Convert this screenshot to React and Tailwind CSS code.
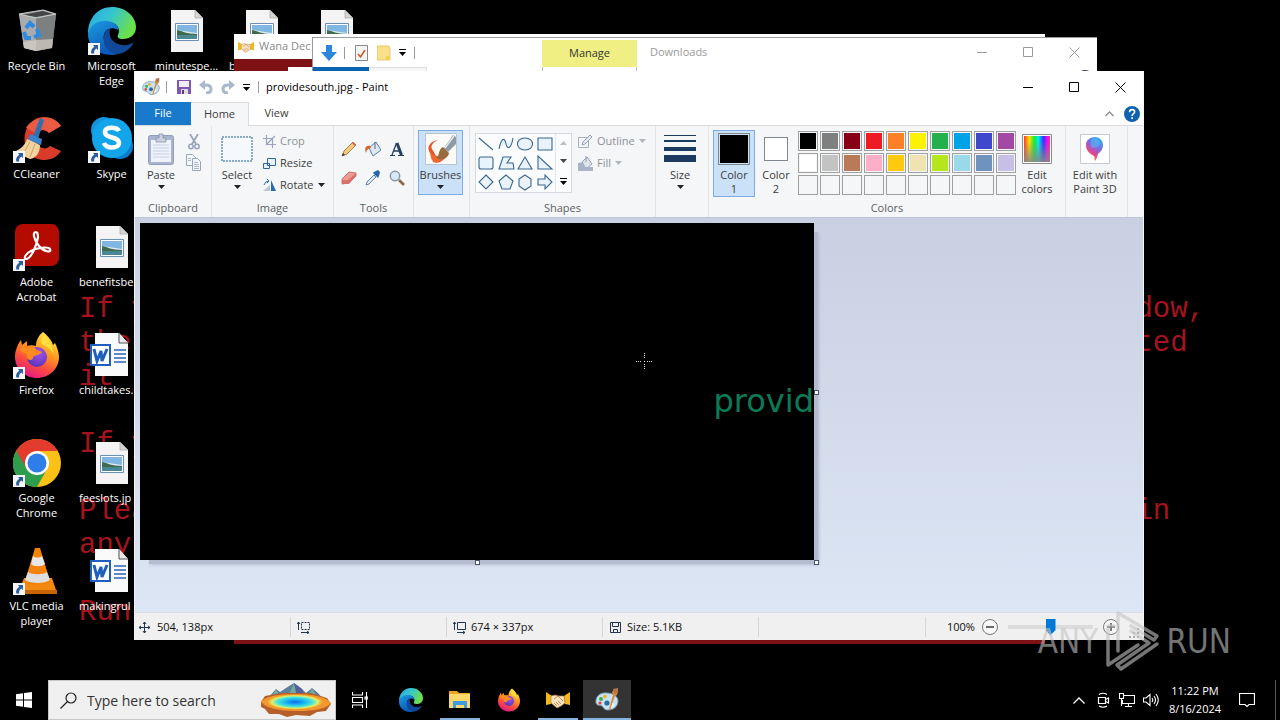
import { useState } from "react"

const Shortcut = () => (
  <svg className="absolute left-0 bottom-0 size-3" viewBox="0 0 12 12">
    <path d="M0 0h12v12H0z" fill="#f4f6f9" />
    <path d="M5 2h5v5L8.400 5.600C6.500 6.700 5.800 8 6.200 10.500H3.300C2.600 7.600 3.700 5.300 6.400 3.700z" fill="#2b5c9e" />
  </svg>
)

const EdgeIcon = ({ className }) => (
  <svg className={className} viewBox="0 0 48 48">
    <defs>
      <linearGradient id="edgeTop" x1="0" y1="0" x2="1" y2="0.4">
        <stop offset="0" stopColor="#2aa9e8" />
        <stop offset="0.5" stopColor="#35c5cf" />
        <stop offset="1" stopColor="#6be04c" />
      </linearGradient>
      <linearGradient id="edgeLeft" x1="0" y1="0" x2="0.5" y2="1">
        <stop offset="0" stopColor="#1b9de2" />
        <stop offset="1" stopColor="#0b57b8" />
      </linearGradient>
    </defs>
    <path d="M24 0C38 0 48 10 48 20c0 8-6 12-13 12-5 0-6-2-5-4 3-6-1-13-10-13C10 15 3 20 0 27 0 11 10 0 24 0z" fill="url(#edgeTop)" />
    <path d="M0 27c2-9 10-14 19-13 8 1 12 5 11 9-8-5-16 1-14 10 2 8 8 13 15 14C13 51 0 41 0 27z" fill="url(#edgeLeft)" />
    <path d="M16 29c1-5 4-7 6-7-2 8 3 15 12 16 5 1 9-1 12-3-4 8-11 12-17 12-9-1-15-9-13-18z" fill="#11499a" />
  </svg>
)

const FirefoxIcon = ({ className }) => (
  <svg className={className} viewBox="0 0 48 48">
    <defs>
      <linearGradient id="ffBody" x1="0.8" y1="0" x2="0.3" y2="1">
        <stop offset="0" stopColor="#fff04c" />
        <stop offset="0.4" stopColor="#ff9a1f" />
        <stop offset="0.7" stopColor="#fb4b3e" />
        <stop offset="1" stopColor="#e4158a" />
      </linearGradient>
      <radialGradient id="ffGlobe" cx="0.6" cy="0.3" r="0.7">
        <stop offset="0" stopColor="#a650f0" />
        <stop offset="1" stopColor="#5a36b8" />
      </radialGradient>
    </defs>
    <path d="M30 1c6 5 9 9 10 13l2-2c3 6 4 11 4 14 0 12-10 21-22 21S2 38 2 26c0-7 3-13 6-17l1 5 5-4v5c3-1 6-1 9 0 0-6 3-11 7-14z" fill="url(#ffBody)" />
    <circle cx="24" cy="26" r="10" fill="url(#ffGlobe)" />
    <path d="M6 18c7-5 14-4 18 1l5 2c-2 3-6 3-8 4-2 2 0 3-3 4-4 0-5-3-4-6-3-1-6-2-8-5z" fill="#ff8a1e" />
    <path d="M31 4c5 5 9 11 9 19-2-5-5-7-10-9-3-3-2-7 1-10z" fill="#ffdd3c" />
  </svg>
)

const PaletteIcon = ({ className }) => (
  <svg className={className} viewBox="0 0 24 24">
    <path d="M12 5C5 4 0 9 1 15c1 3 4 2 6 3 2 2 2 4 6 4 6 0 10-4 10-9 0-4-4-8-11-8z" fill="#c9e2f2" stroke="#6d93ad" strokeWidth="1" />
    <circle cx="6" cy="11" r="2" fill="#3dae49" />
    <circle cx="10" cy="8.500" r="1.800" fill="#f0b21c" />
    <circle cx="5" cy="15" r="1.600" fill="#e0443b" />
    <circle cx="12" cy="15" r="2.600" fill="#2c6da8" />
    <circle cx="17" cy="17" r="2" fill="#fff" />
    <path d="M20 1l3 1-1 5-2 1-5 14-1-1 4-14-1-3z" fill="#d98a3a" />
    <path d="M18 1l5-1v5l-4 1z" fill="#b87544" />
  </svg>
)

const HandsIcon = ({ className }) => (
  <svg className={className} viewBox="0 0 24 18">
    <path d="M0 1l6 4-1 8-5 1zM24 1l-6 4 1 8 5 1z" fill="#f2b91c" />
    <path d="M5 5l4-1 4 1 5 0 1 7-4 3-4 2-6-5z" fill="#f9e2c0" stroke="#b5793f" strokeWidth=".7" />
    <path d="M8 8l4-3 5 5M8 12l3 3M10 11l3 3M12 10l3 3" stroke="#b5793f" strokeWidth=".8" fill="none" />
  </svg>
)

const BinIcon = () => (
  <svg className="size-12" viewBox="0 0 48 48">
    <path d="M6 7l24-4 13 4-4 34-16 3-12-3z" fill="#8f9293" />
    <path d="M6 7l17 4v33l-12-3z" fill="#a9abac" />
    <path d="M23 11l20-4-4 34-16 3z" fill="#7d8081" />
    <path d="M9 8l21-4 10 3-17 3z" fill="#434546" />
    <path d="M6 7l24-4 13 4-20 4z" fill="none" stroke="#c9cbcc" strokeWidth="1.200" />
    <path d="M10 35l13-2 17-1-1 9-16 3-12-3z" fill="#d8d0c8" opacity=".7" />
    <g fill="none" stroke="#2c8be0" strokeWidth="4">
      <path d="M13 21l4-5 4 4" />
      <path d="M24 22l2 6-5 2" />
      <path d="M18 31h-5l-2-6" />
    </g>
  </svg>
)

const CCleanerIcon = () => (
  <svg className="size-12" viewBox="0 0 48 48">
    <path d="M48 11L36 18c-4-5-12-3-13 4-1 9 8 15 14 9l11 5C42 46 27 48 18 40 8 31 10 12 21 5c9-6 22-2 27 6z" fill="#d83b2a" />
    <path d="M48 11L36 18c-4-5-10-4-12 1L13 13C19 2 39-3 48 11z" fill="#ea5b43" />
    <path d="M27 3l4 2-6 19-5-2z" fill="#2f6fb3" />
    <path d="M17 19l12 5-1 6-13-5z" fill="#3a82cc" />
    <path d="M14 24l13 6c0 8-4 13-10 14L1 37c7-3 11-7 13-13z" fill="#f3d4a0" />
    <path d="M17 27l-7 12M22 29l-5 13" stroke="#cfa262" strokeWidth="1" />
  </svg>
)

const SkypeIcon = () => (
  <svg className="size-12" viewBox="0 0 48 48">
    <circle cx="16" cy="15" r="13" fill="#1493df" />
    <circle cx="32" cy="31" r="13" fill="#0d7bd0" />
    <circle cx="24" cy="23" r="20" fill="#12a5ea" />
    <path d="M31 16c-2-4-14-5-14 1 0 7 14 4 14 11 0 6-13 6-15 0" fill="none" stroke="#fff" strokeWidth="4.500" />
  </svg>
)

const AcrobatIcon = () => (
  <svg className="size-12" viewBox="0 0 48 48">
    <rect x="2" y="1" width="44" height="42" rx="8" fill="#b30b00" />
    <path d="M23 9c-4 0-2 8 3 14 5 6 13 7 11 3-2-3-14-1-19 2-5 2-8 8-5 8 5 0 11-14 12-22 0-3-1-5-2-5z" fill="none" stroke="#fff" strokeWidth="2.200" />
  </svg>
)

const ChromeIcon = () => (
  <svg className="size-12" viewBox="0 0 48 48">
    <circle cx="24" cy="24" r="24" fill="#fbc116" />
    <path d="M24 24L3.200 12A24 24 0 0 0 24 48l10-18z" fill="#2e9e4c" />
    <path d="M3.200 12A24 24 0 0 1 44.800 12H24L14 30z" fill="#e33b2e" />
    <circle cx="24" cy="24" r="12" fill="#fff" />
    <circle cx="24" cy="24" r="9.500" fill="#2f7de9" />
  </svg>
)

const VlcIcon = () => (
  <svg className="size-12" viewBox="0 0 48 48">
    <path d="M11 31h28l5 15H5z" fill="#f28a10" />
    <path d="M5 43h39v4H4z" fill="#c96405" />
    <path d="M22 1h5l10 33c-2 5-23 5-25 0z" fill="#f4820b" />
    <path d="M20 9c2 2 7 2 9 0l3 8c-3 3-11 3-14 0z" fill="#e8e8e8" />
    <path d="M15 25c4 3 15 3 19 0l3 8c-5 4-20 4-25 0z" fill="#dedede" />
  </svg>
)

const PictureFileIcon = () => (
  <svg className="size-12" viewBox="0 0 48 48">
    <path d="M8 3h24l8 8v34H8z" fill="#f4f4f4" />
    <path d="M32 3v8h8z" fill="#d5d5d5" stroke="#a7a7a7" strokeWidth=".7" />
    <path d="M12.500 16.500h23v17h-23z" fill="#fff" stroke="#6c8fb8" />
    <path d="M14 18h20v14H14z" fill="#7fb6e2" />
    <path d="M14 23l20 3v2H14z" fill="#dcebf2" />
    <path d="M14 23c6 1 9 4 20 4v2H14z" fill="#3f6b4c" />
    <path d="M14 28h20v4H14z" fill="#4c8894" />
  </svg>
)

const WordFileIcon = () => (
  <svg className="size-12" viewBox="0 0 48 48">
    <path d="M7 2h24l9 10v33H7z" fill="#fafafa" />
    <path d="M31 2v10h9" fill="#e9e9e9" stroke="#555" strokeWidth="1" />
    <path d="M26 19h12M26 23h12M26 27h12M26 31h12" stroke="#2b63b8" strokeWidth="1.500" />
    <path d="M2 13h21v22H2z" fill="#1f5fbe" />
    <path d="M4 15h17v18H4z" fill="#fff" />
    <path d="M6 18l3 12 4-10 1 10 5-12" fill="none" stroke="#1f5fbe" strokeWidth="3" />
  </svg>
)

const DownArrow = ({ className = "fill-[#222]" }) => (
  <svg className={"w-[7px] h-1 shrink-0 " + className} viewBox="0 0 7 4"><path d="M0 0h7L3.500 4z" /></svg>
)

const MoreArrow = () => (
  <svg className="w-[7px] h-[7px]" viewBox="0 0 7 7"><path d="M0 0h7v1H0zM0 3h7L3.500 7z" /></svg>
)

const WindowButtons = () => (
  <div className="ml-auto flex self-stretch">
    <button aria-label="Minimize" className="w-[45px] flex items-center justify-center">
      <svg className="size-[11px]" viewBox="0 0 11 11"><path d="M0 5.500h10" stroke="currentColor" /></svg>
    </button>
    <button aria-label="Maximize" className="w-[46px] flex items-center justify-center">
      <svg className="size-[11px]" viewBox="0 0 11 11"><path d="M.5.500h9v9h-9z" fill="none" stroke="currentColor" /></svg>
    </button>
    <button aria-label="Close" className="w-[46px] flex items-center justify-center">
      <svg className="size-[11px]" viewBox="0 0 11 11"><path d="M.5.500l10 10M10.500.500l-10 10" stroke="currentColor" /></svg>
    </button>
  </div>
)

const desktopItems = [
  { label: "Recycle Bin", Icon: BinIcon },
  { label: "CCleaner", Icon: CCleanerIcon, link: true },
  { label: "Adobe Acrobat", Icon: AcrobatIcon, link: true },
  { label: "Firefox", Icon: () => <FirefoxIcon className="size-12" />, link: true },
  { label: "Google Chrome", Icon: ChromeIcon, link: true },
  { label: "VLC media player", Icon: VlcIcon, link: true },
  { label: "Microsoft Edge", Icon: () => <EdgeIcon className="size-12" />, link: true },
  { label: "Skype", Icon: SkypeIcon, link: true },
  { label: "benefitsbe", Icon: PictureFileIcon, left: true },
  { label: "childtakes.", Icon: WordFileIcon, left: true },
  { label: "feeslots.jp", Icon: PictureFileIcon, left: true },
  { label: "makingrul", Icon: WordFileIcon, left: true },
  { label: "minutespe...", Icon: PictureFileIcon },
]

const DesktopItem = ({ label, Icon, link, left }) => (
  <button className="w-full relative flex flex-col items-center pt-[7px] text-white leading-[15px]">
    <span className="relative block">
      <Icon />
      {link && <Shortcut />}
    </span>
    <span className={left ? "mt-[3px] w-full pl-[5px] text-left whitespace-nowrap" : "mt-[3px] px-1 text-center"}>{label}</span>
  </button>
)

const Desktop = () => (
  <div className="absolute -left-px top-0 grid grid-flow-col grid-rows-[repeat(6,108px)] auto-cols-[75px]">
    {desktopItems.map((item) => <DesktopItem key={item.label} {...item} />)}
    <div className="row-start-1 col-start-4"><DesktopItem label="b" Icon={PictureFileIcon} left /></div>
    <div className="row-start-1 col-start-5"><DesktopItem Icon={PictureFileIcon} /></div>
  </div>
)

const Wallpaper = () => (
  <div className="absolute left-0 right-0 top-[293px] pl-[79px] pr-[75px] flex justify-between whitespace-pre font-['Liberation_Mono',monospace] text-[29px] leading-[34px] text-[#a5141e]">
    <div className="flex flex-col gap-[33px]">
      <p>{"If y\nthen\nit"}</p>
      <p>If y</p>
      <p>{"Plea\nany"}</p>
      <p>Run</p>
    </div>
    <div className="flex flex-col gap-[33px]">
      <p>{"dow,\nted\n "}</p>
      <p>{" "}</p>
      <p>in</p>
    </div>
  </div>
)

const WanaWindow = () => (
  <div className="absolute left-[234px] right-[235px] top-[34px] bottom-[76px] bg-[#7d1113]">
    <div className="h-[25px] bg-white flex items-center gap-[5px] pl-1 text-[#8a8a8a]">
      <HandsIcon className="w-4 h-3" />
      <span>Wana Dec</span>
    </div>
    <div className="mt-2 ml-[54px] mr-4 h-10 bg-white"></div>
  </div>
)

const ExplorerWindow = () => (
  <div className="absolute left-[312px] right-[183px] top-[37px] bottom-24 bg-white border-t border-l border-[#9a9a9a]">
    <div className="h-[29px] flex items-center text-[#9a9a9a]">
      <svg className="ml-2 size-4" viewBox="0 0 16 16"><path d="M5 0h6v7h5l-8 9-8-9h5z" fill="#2b87dd" /></svg>
      <span className="ml-[7px] w-px h-3 bg-[#999]"></span>
      <svg className="ml-2.5 w-[13px] h-4" viewBox="0 0 13 16">
        <path d="M.5.500h12v15H.5z" fill="#f5f5f5" stroke="#888" />
        <path d="M3 9l2.500 3L10 5" fill="none" stroke="#d85a28" strokeWidth="1.600" />
      </svg>
      <svg className="ml-[9px] w-[14px] h-4" viewBox="0 0 14 16">
        <path d="M0 1h12l1 3v11H0z" fill="#fbe08a" stroke="#e3bd55" strokeWidth=".8" />
        <path d="M9 11h4v4H9z" fill="#f6cd58" />
      </svg>
      <span className="ml-2 text-black"><MoreArrow /></span>
      <span className="ml-2 w-px h-3 bg-[#999]"></span>
      <span className="ml-[127px] mt-0.5 self-stretch w-[95px] flex items-center justify-center bg-[#f0ef83] text-[#333]">Manage</span>
      <span className="ml-[13px]">Downloads</span>
      <WindowButtons />
    </div>
    <div className="h-6 flex">
      <div className="w-14 bg-[#0a64b0]"></div>
      <div className="w-[58px] bg-[#f5f6f7] border-t border-r border-[#ddd]"></div>
      <div className="ml-[115px] w-[95px] border-x border-[#bbb]"></div>
      <div className="ml-auto mr-1 mt-[3px] size-4 rounded-full bg-[#26364a]"></div>
    </div>
  </div>
)

const Group = ({ label, className, children }) => (
  <div className={"h-[91px] pt-1 flex flex-col border-r border-[#e2e4e7] " + className}>
    <div className="flex-1 flex">{children}</div>
    <div className="h-4 mb-px text-center leading-4 text-[#5c5f63]">{label}</div>
  </div>
)

// tall ribbon button: picture, one or two caption lines, optional menu arrow
const BigButton = ({ icon, lines, arrow, className }) => (
  <button className={"flex flex-col items-center leading-[13px] border " + className}>
    <span className="h-9 flex items-center justify-center">{icon}</span>
    {lines.map((line) => <span key={line} className="block mt-px first:mt-0 whitespace-nowrap">{line}</span>)}
    {arrow && <span className="mt-1"><DownArrow /></span>}
  </button>
)

const shapes = [
  "M2 3l14 12",
  "M2 14C5 0 8 4 9 9s5 6 7-6",
  "M9 3c10 0 10 12 0 12S-1 3 9 3z",
  "M2 3h14v12H2z",
  "M4 3h10q2 0 2 2v8q0 2-2 2H4q-2 0-2-2V5q0-2 2-2z",
  "M6 3h8l-4 6h6l1 6H2z",
  "M9 3l7 12H2z",
  "M2 2v13h14z",
  "M9 2l7 7-7 7-7-7z",
  "M9 2l7 6-3 8H5L2 8z",
  "M9 2l6 4v7l-6 4-6-4V6z",
  "M2 6h7V2l7 7-7 7v-4H2z",
]

const palette = [
  "bg-black", "bg-[#7f7f7f]", "bg-[#880015]", "bg-[#ed1c24]", "bg-[#ff7f27]", "bg-[#fff200]", "bg-[#22b14c]", "bg-[#00a2e8]", "bg-[#3f48cc]", "bg-[#a349a4]",
  "bg-white", "bg-[#c3c3c3]", "bg-[#b97a57]", "bg-[#ffaec9]", "bg-[#ffc90e]", "bg-[#efe4b0]", "bg-[#b5e61d]", "bg-[#99d9ea]", "bg-[#7092be]", "bg-[#c8bfe7]",
  "", "", "", "", "", "", "", "", "", "",
]

const tools = [
  {
    name: "Pencil",
    icon: <><path d="M1 15l2-5L12 1l3 3-9 9z" fill="#f3c982" stroke="#a06a2c" strokeWidth=".8" /><path d="M11 2l3 3 1-1-3-3z" fill="#d8574f" /><path d="M1 15l1-3 2 2z" fill="#333" /></>,
  },
  {
    name: "Fill with color",
    icon: <><path d="M4 7l7-6 5 8-8 6z" fill="#dce9f5" stroke="#5c7f9f" /><path d="M10 1v7" stroke="#4e6d8c" /><path d="M5 5C1 4-1 7 1 12c1-4 2-4 5-5z" fill="#d7632e" /></>,
  },
  {
    name: "Text",
    icon: <><path d="M7.500 2L3 14M5 10h6" fill="none" stroke="#24415f" strokeWidth="1.300" /><path d="M8 2l4.500 12" fill="none" stroke="#24415f" strokeWidth="3" /><path d="M1 14.500h5M9 14.500h6" stroke="#24415f" strokeWidth="1.200" /></>,
  },
  {
    name: "Eraser",
    icon: <><path d="M1 9l7-7 7 1v3l-7 7-7 1z" fill="#f09a96" stroke="#c25f5c" strokeWidth=".8" /><path d="M1 10h6l8-7v3l-7 8H1z" fill="#d8716d" /></>,
  },
  {
    name: "Color picker",
    icon: <><path d="M1 15l1-3 7-7 2 2-7 7z" fill="#dce9f5" stroke="#54789c" strokeWidth=".9" /><path d="M8 3l5 5 1-2 1-4-2-2-4 2z" fill="#2167ac" /></>,
  },
  {
    name: "Magnifier",
    icon: <><circle cx="6" cy="6" r="4.700" fill="#d7e9f7" stroke="#8593a3" strokeWidth="1.400" /><path d="M10 10l5 5" stroke="#8b6750" strokeWidth="2.600" /></>,
  },
]

const Ribbon = () => (
  <div className="flex h-[92px] bg-[#f5f6f7] border-t border-[#dadbdc] text-[#3c3c3c]">
    <Group label="Clipboard" className="w-[77px]">
      <BigButton className="w-[42px] ml-[5px] border-transparent" lines={["Paste"]} arrow icon={
        <svg className="w-[26px] h-8" viewBox="0 0 26 32">
          <rect x=".5" y="2.500" width="25" height="29" rx="2" fill="#a9b5ce" stroke="#919dbb" />
          <path d="M3 7h20v22H3z" fill="#eef2fa" />
          <path d="M8 5h3V1h4v4h3v4H8z" fill="#c9d1e0" stroke="#8592ad" strokeWidth=".8" />
          <path d="M5 12h16M5 15h16M5 18h16M5 21h16M5 24h16" stroke="#c7d0e2" />
        </svg>
      } />
      <div className="flex flex-col gap-1 ml-1">
        <button aria-label="Cut" className="pt-1 pl-0.5">
          <svg className="w-3 h-4" viewBox="0 0 12 16">
            <path d="M2 0l6 10M10 0L4 10" stroke="#98a4bc" strokeWidth="1.800" />
            <circle cx="3" cy="12.500" r="2.200" fill="none" stroke="#98a4bc" strokeWidth="1.500" />
            <circle cx="9" cy="12.500" r="2.200" fill="none" stroke="#98a4bc" strokeWidth="1.500" />
          </svg>
        </button>
        <button aria-label="Copy">
          <svg className="w-4 h-[17px]" viewBox="0 0 16 17">
            <g fill="#f4f7fc" stroke="#98a4bc">
              <path d="M.5.500h6l3 3v8h-9z" />
              <path d="M6.500 4.500h5l3 3v9h-8z" />
              <path d="M2 4.500h3M2 6.500h3M8 8.500h4M8 10.500h5M8 12.500h5M8 14.500h5" strokeWidth=".8" />
            </g>
          </svg>
        </button>
      </div>
    </Group>

    <Group label="Image" className="w-[122px]">
      <BigButton className="w-[42px] ml-1 border-transparent" lines={["Select"]} arrow icon={
        <svg className="w-8 h-[26px]" viewBox="0 0 32 26"><path d="M1 1h30v24H1z" fill="#f5f9fe" stroke="#1d5d9b" strokeDasharray="2 1" /></svg>
      } />
      <div className="ml-[5px] flex flex-col">
        <button className="h-[22px] flex items-center gap-1 text-[#8d9199]">
          <svg className="size-[13px]" viewBox="0 0 13 13"><path d="M3.500 0v9.500H13M0 3.500h9.500V13M3 10L12 1" fill="none" stroke="#9aa5ba" strokeWidth="1.200" /></svg>
          Crop
        </button>
        <button className="h-[22px] flex items-center gap-1">
          <svg className="size-[13px]" viewBox="0 0 13 13"><path d="M4.500 1.500h8v7h-8zM.5 6.500h6v5h-6z" fill="#e9f3fb" stroke="#2a66a0" /></svg>
          Resize
        </button>
        <button className="h-[22px] flex items-center gap-1">
          <svg className="size-[13px]" viewBox="0 0 13 13">
            <path d="M0 12h7V6z" fill="#b8c8d6" /><path d="M8 1v11h5z" fill="#2a6ea8" /><path d="M1 6q1-4 5-4M4 0l2 2-2 2" fill="none" stroke="#2a6ea8" />
          </svg>
          Rotate
          <DownArrow />
        </button>
      </div>
    </Group>

    <Group label="Tools" className="w-20">
      <div className="ml-[3px] mt-1 grid grid-cols-3 grid-rows-[29px_29px] w-[72px]">
        {tools.map((tool) => (
          <button key={tool.name} aria-label={tool.name} className="flex items-center justify-center">
            <svg className="size-4" viewBox="0 0 16 16">{tool.icon}</svg>
          </button>
        ))}
      </div>
    </Group>

    <Group className="w-14">
      <BigButton className="w-[45px] h-[65px] ml-1 border-[#7eace0] bg-[#cbe1f8]" lines={["Brushes"]} arrow icon={
        <svg className="size-8" viewBox="0 0 32 32">
          <path d="M.5.500h31v31H.5z" fill="#fbfaf7" stroke="#b8c4d2" />
          <path d="M13 7C6 8 2 13 4 18c2 4 4 5 4 11 4 2 9 0 12-4-4 1-9 0-10-4C9 18 5 15 7 12c1-2 3-4 6-5z" fill="#e8552a" />
          <path d="M5 20c2 2 6 3 9 3l6 1c-4 5-10 6-12 4-2-1-2-4-3-8z" fill="#ef6a32" />
          <path d="M28 2l3 2v7l-8 8-4-4z" fill="#8e9aa5" />
          <path d="M29 3l-9 12" stroke="#dfe6ea" strokeWidth="1.500" />
          <path d="M18 14l6 6c-1 6-8 8-13 5 4-2 2-9 7-11z" fill="#9a6a3c" />
        </svg>
      } />
    </Group>

    <Group label="Shapes" className="w-[186px]">
      <div className="ml-[5px] mt-[3px] w-[97px] h-[60px] flex border border-[#d5dae0] bg-[#fafcfe]">
        <div className="w-20 grid grid-cols-4 grid-rows-3 border-r border-[#e2e6ea]">
          {shapes.map((d) => (
            <button key={d} aria-label="Shape" className="flex items-center justify-center">
              <svg className="size-[18px]" viewBox="0 0 18 18"><path d={d} fill="#eaf3fc" stroke="#3a6790" strokeWidth="1.100" /></svg>
            </button>
          ))}
        </div>
        <div className="flex-1 flex flex-col items-center justify-around">
          <DownArrow className="rotate-180 fill-[#b9bdc4]" />
          <DownArrow className="fill-[#444]" />
          <MoreArrow />
        </div>
      </div>
      <div className="ml-1.5 flex flex-col text-[#8d9199]">
        <button className="h-[22px] flex items-center gap-1">
          <svg className="size-[15px]" viewBox="0 0 15 15"><path d="M11 3.500H.5v10h10V7" fill="none" stroke="#a5afc2" /><path d="M4 11l1-3 7-7 2 2-7 7z" fill="#e6eaf2" stroke="#95a1b8" /></svg>
          Outline
          <DownArrow className="fill-[#b0b4bb]" />
        </button>
        <button className="h-[22px] flex items-center gap-1">
          <svg className="size-[15px]" viewBox="0 0 15 15"><path d="M4 6l5-5 5 7-6 5z" fill="#dfe5ef" stroke="#95a1b8" /><path d="M0 7l5-1 2 5h8v4H0z" fill="#a9b4c9" /><path d="M8 0v6" stroke="#95a1b8" /></svg>
          Fill
          <DownArrow className="fill-[#b0b4bb]" />
        </button>
      </div>
    </Group>

    <Group className="w-[53px]">
      <BigButton className="w-[42px] ml-[3px] border-transparent" lines={["Size"]} arrow icon={
        <svg className="w-8 h-[30px]" viewBox="0 0 32 30"><path d="M0 1h32v1H0zM0 6h32v2H0zM0 13h32v4H0zM0 21h32v7H0z" fill="#1d3a60" /></svg>
      } />
    </Group>

    <Group label="Colors" className="w-[357px]">
      <BigButton className="w-[42px] h-[67px] ml-1 border-[#7eace0] bg-[#cbe1f8]" lines={["Color", "1"]} icon={
        <span className="block size-8 bg-black border border-[#7f868e] ring-1 ring-inset ring-[#cbe1f8]"></span>
      } />
      <BigButton className="w-[42px] border-transparent" lines={["Color", "2"]} icon={
        <span className="block size-6 bg-white border border-[#7f868e]"></span>
      } />
      <div className="ml-px mt-px grid grid-cols-[repeat(10,20px)] auto-rows-[20px] gap-0.5 content-start">
        {palette.map((color, i) => (
          <button key={i} aria-label={"Color " + (i + 1)} className="border border-[#a0a0a0] p-px">
            <span className={"block size-full " + color}></span>
          </button>
        ))}
      </div>
      <BigButton className="w-[42px] border-transparent" lines={["Edit", "colors"]} icon={
        <svg className="size-[30px]" viewBox="0 0 30 30">
          <defs>
            <linearGradient id="hues">
              <stop offset="0" stopColor="#f33" /><stop offset=".2" stopColor="#fd0" /><stop offset=".4" stopColor="#1e3" />
              <stop offset=".55" stopColor="#0ee" /><stop offset=".75" stopColor="#33f" /><stop offset=".9" stopColor="#f0f" /><stop offset="1" stopColor="#f36" />
            </linearGradient>
            <linearGradient id="grayFade" x2="0" y2="1">
              <stop offset=".2" stopColor="#888" stopOpacity="0" /><stop offset="1" stopColor="#888" stopOpacity=".9" />
            </linearGradient>
          </defs>
          <path d="M.5.500h29v29H.5z" fill="#fff" stroke="#8c8c8c" />
          <path d="M2 2h26v26H2z" fill="url(#hues)" />
          <path d="M2 2h26v26H2z" fill="url(#grayFade)" />
        </svg>
      } />
    </Group>

    <Group className="w-[62px]">
      <BigButton className="w-[58px] border-transparent" lines={["Edit with", "Paint 3D"]} icon={
        <svg className="size-[30px]" viewBox="0 0 30 30">
          <defs>
            <linearGradient id="drop" x1=".8" y1="0" x2=".3" y2="1">
              <stop offset="0" stopColor="#22b8ee" /><stop offset=".4" stopColor="#7b6ae6" /><stop offset=".7" stopColor="#e0468f" /><stop offset="1" stopColor="#f5a623" />
            </linearGradient>
          </defs>
          <path d="M.5.500h29v29H.5z" fill="#fff" stroke="#c6c9cd" />
          <path d="M15 3c5 0 8 4 8 8 0 5-3 7-5 9-1 2-1 5-3 7-1-2 0-4-1-5-4-2-8-5-8-11 0-5 4-8 9-8z" fill="url(#drop)" />
          <path d="M11 6c3-3 8-1 9 3 0 4-6 6-9 4z" fill="#53c4f4" opacity=".5" />
        </svg>
      } />
    </Group>
  </div>
)

const Handle = ({ className }) => (
  <span className={"absolute size-[5px] bg-white border border-[#46536b] " + className}></span>
)

const Canvas = () => (
  <div className="flex-1 min-h-0 overflow-hidden border-t border-[#bcc6d8] bg-linear-to-b from-[#c8d0e1] to-[#dde6f5] pt-[5px] pl-[5px]">
    <div className="relative w-[674px] h-[337px]">
      <div className="absolute left-[9px] top-[9px] -right-1 -bottom-1 bg-[#b3bbcf] shadow-[1px_1px_3px_#b6bfd3]"></div>
      <div className="relative h-full bg-black overflow-hidden flex justify-end items-center">
        <span className="pt-[18px] font-['DejaVu_Sans',sans-serif] text-[32px] text-[#0c7a56]">provid</span>
      </div>
      <svg className="absolute left-[496px] top-[130px] size-[17px]" viewBox="0 0 17 17">
        <path d="M8.500 0v6M8.500 11v6M0 8.500h6M11 8.500h6" stroke="#ddd" strokeDasharray="1 1" /><path d="M8 8h1v1H8z" fill="#fff" />
      </svg>
      <Handle className="left-full top-1/2 -mt-0.5" />
      <Handle className="left-1/2 top-full -ml-0.5" />
      <Handle className="left-full top-full" />
    </div>
  </div>
)

const StatusBar = () => {
  const [zoom, setZoom] = useState(50)

  return (
    <div className="h-7 pt-px flex items-center bg-[#f0f0f0] border-t border-[#d9dce1] text-[#111]">
      <div className="w-[156px] h-5 pl-1 flex items-center gap-[7px] border-r border-[#d5d5d5]">
        <svg className="size-[11px]" viewBox="0 0 11 11"><path d="M5.500 0v11M0 5.500h11M4 2l1.500-2L7 2M4 9l1.500 2L7 9M2 4L0 5.500 2 7M9 4l2 1.500L9 7" fill="none" stroke="#24364f" /></svg>
        504, 138px
      </div>
      <div className="w-[156px] h-5 pl-1.5 flex items-center border-r border-[#d5d5d5]">
        <svg className="size-[13px]" viewBox="0 0 13 13"><path d="M4.500 1.500h8v7h-8z" fill="none" stroke="#24364f" strokeDasharray="2 1" /><path d="M1.500 9V1M0 3l1.500-2L3 3M4 11.500h8M10 10l2 1.500-2 1.500" fill="none" stroke="#24364f" /></svg>
      </div>
      <div className="w-[156px] h-5 pl-1.5 flex items-center gap-[5px] border-r border-[#d5d5d5]">
        <svg className="size-[13px]" viewBox="0 0 13 13"><path d="M4.500 1.500h8v7h-8zM1.500 9V1M0 3l1.500-2L3 3M4 11.500h8M10 10l2 1.500-2 1.500" fill="none" stroke="#24364f" /></svg>
        674 × 337px
      </div>
      <div className="w-[156px] h-5 pl-[7px] flex items-center gap-1.5 border-r border-[#d5d5d5]">
        <svg className="size-[11px]" viewBox="0 0 11 11"><path d="M.5.500h10v10H.5zM2.500.500v4h6v-4M3.500 10.500v-3h4v3" fill="none" stroke="#24364f" /></svg>
        Size: 5.1KB
      </div>
      <div className="ml-auto h-5 border-l border-[#d5d5d5]"></div>
      <label htmlFor="zoom" className="ml-[21px] w-[31px]">100%</label>
      <button aria-label="Zoom out" className="ml-1">
        <svg className="size-4" viewBox="0 0 16 16"><circle cx="8" cy="8" r="7.500" fill="#f8f8f8" stroke="#777" /><path d="M4 8h8" stroke="#444" strokeWidth="1.600" /></svg>
      </button>
      <input
        id="zoom"
        type="range"
        value={zoom}
        onChange={(e) => setZoom(e.target.value)}
        className="ml-2.5 w-[85px] h-4 appearance-none bg-transparent [&::-webkit-slider-runnable-track]:h-1 [&::-webkit-slider-runnable-track]:bg-[#dcdcdc] [&::-webkit-slider-thumb]:appearance-none [&::-webkit-slider-thumb]:-mt-1.5 [&::-webkit-slider-thumb]:w-2.5 [&::-webkit-slider-thumb]:h-4 [&::-webkit-slider-thumb]:bg-[#0078d7] [&::-webkit-slider-thumb]:[clip-path:polygon(0_0,100%_0,100%_70%,50%_100%,0_70%)]"
      />
      <button aria-label="Zoom in" className="ml-2.5">
        <svg className="size-4" viewBox="0 0 16 16"><circle cx="8" cy="8" r="7.500" fill="#f8f8f8" stroke="#777" /><path d="M4 8h8M8 4v8" stroke="#444" strokeWidth="1.400" /></svg>
      </button>
      <svg className="ml-2.5 mr-1 mt-3 size-[10px]" viewBox="0 0 10 10"><path d="M8 0h2v2H8zM8 4h2v2H8zM8 8h2v2H8zM4 4h2v2H4zM4 8h2v2H4zM0 8h2v2H0z" fill="#a9a9a9" /></svg>
    </div>
  )
}

const PaintWindow = () => (
  <div className="absolute left-[134px] right-[136px] top-[71px] bottom-20 flex flex-col bg-white border-x border-[#f3f5f8]">
    <div className="h-[31px] pt-px flex items-center">
      <PaletteIcon className="ml-[7px] size-[18px]" />
      <span className="ml-1.5 w-px h-3 bg-[#a0a0a0]"></span>
      <button aria-label="Save" className="ml-2.5">
        <svg className="size-[14px]" viewBox="0 0 14 14"><path d="M0 0h14v14H0z" fill="#7f58ad" /><path d="M2 1h10v6H2z" fill="#f2eef8" /><path d="M4 9h7v5H4z" fill="#ddd" /><path d="M5 10h2v4H5z" fill="#5b3a88" /></svg>
      </button>
      <button aria-label="Undo" className="ml-2">
        <svg className="size-[14px]" viewBox="0 0 14 14"><path d="M3 5h4q5 0 5 4t-5 4" fill="none" stroke="#a9b8cf" strokeWidth="3" /><path d="M0 5l6-5v10z" fill="#a9b8cf" /></svg>
      </button>
      <button aria-label="Redo" className="ml-2">
        <svg className="size-[14px]" viewBox="0 0 14 14"><path d="M11 5H7q-5 0-5 4t5 4" fill="none" stroke="#a9b8cf" strokeWidth="3" /><path d="M14 5L8 0v10z" fill="#a9b8cf" /></svg>
      </button>
      <button aria-label="Customize" className="ml-2"><MoreArrow /></button>
      <span className="ml-2 w-px h-3 bg-[#a0a0a0]"></span>
      <span className="ml-[7px] text-black">providesouth.jpg - Paint</span>
      <WindowButtons />
    </div>
    <div className="h-[23px] flex items-stretch text-[#3c3c3c]">
      <button className="w-14 bg-[#1979ca] text-white">File</button>
      <button className="w-[58px] -mb-px relative bg-[#f5f6f7] border-t border-r border-[#dadbdc]">Home</button>
      <button className="w-[55px]">View</button>
      <button aria-label="Collapse ribbon" className="ml-auto">
        <svg className="w-[9px] h-[6px]" viewBox="0 0 9 6"><path d="M.5 5l4-4 4 4" fill="none" stroke="#8a8a8a" strokeWidth="1.300" /></svg>
      </button>
      <button aria-label="Help" className="ml-2.5 mr-[3px]">
        <svg className="size-4" viewBox="0 0 16 16">
          <circle cx="8" cy="8" r="8" fill="#0f62ae" /><path d="M5.500 6.200q0-2.600 2.600-2.600t2.500 2.300c0 1.700-2.500 1.900-2.500 4" fill="none" stroke="#fff" strokeWidth="1.600" /><path d="M7.200 11.200h1.800V13H7.200z" fill="#fff" />
        </svg>
      </button>
    </div>
    <Ribbon />
    <Canvas />
    <StatusBar />
  </div>
)

const Watermark = () => (
  <div className="absolute right-[49px] bottom-[46px] h-[66px] flex items-center gap-1.5 text-[#c4c4c4]/60 pointer-events-none font-['Liberation_Sans_Narrow','DejaVu_Sans_Condensed',sans-serif] text-[33px] leading-none">
    <span>ANY</span>
    <svg className="w-[56px] h-[64px]" viewBox="0 0 56 64">
      <g fill="none" stroke="currentColor" strokeWidth="3.500" strokeLinejoin="round" strokeLinecap="round">
        <path d="M14 42V4l39 23-3 4-23-14" />
        <path d="M10 17H4v39l30-20" />
        <path d="M53 35L17 60l-4-4 32-22-18-12" />
      </g>
    </svg>
    <span>RUN</span>
  </div>
)

const TaskButton = ({ label, active, running, children }) => (
  <button aria-label={label} className={active ? "relative w-12 flex items-center justify-center bg-[#333]" : "relative w-12 flex items-center justify-center"}>
    {children}
    {running && <span className={active ? "absolute inset-x-0 bottom-0 h-0.5 bg-[#84b2e2]" : "absolute inset-x-1 bottom-0 h-0.5 bg-[#84b2e2]"}></span>}
  </button>
)

const Taskbar = () => (
  <div className="absolute inset-x-0 bottom-0 h-10 flex items-stretch bg-black text-white">
    <button aria-label="Start" className="w-12 flex items-center justify-center">
      <svg className="size-4" viewBox="0 0 16 16"><path d="M0 2.300l7-1v6.200H0zM8 1.100L16 0v7.500H8zM0 8.500h7v6.200l-7-1zM8 8.500h8V16l-8-1.100z" fill="#fff" /></svg>
    </button>
    <div className="w-72 pl-[11px] pr-[3px] flex items-center bg-[#f0f0f0] border border-[#c8c8c8] text-[#333]">
      <svg className="size-[17px] shrink-0" viewBox="0 0 17 17"><circle cx="11" cy="6" r="5" fill="none" stroke="#222" strokeWidth="1.200" /><path d="M7.500 9.500L.5 16.500" stroke="#222" strokeWidth="1.200" /></svg>
      <input type="text" aria-label="Search" placeholder="Type here to search" className="ml-2.5 flex-1 min-w-0 text-[14px] outline-none placeholder:text-[#333]" />
      <svg className="w-[72px] h-9 shrink-0" viewBox="0 0 72 36">
        <defs>
          <radialGradient id="spring">
            <stop offset="0" stopColor="#1468e8" /><stop offset=".35" stopColor="#18b6f2" /><stop offset=".65" stopColor="#4fe6d6" />
            <stop offset=".82" stopColor="#dff06a" /><stop offset="1" stopColor="#f5941e" />
          </radialGradient>
        </defs>
        <path d="M9 15l7-8 4 3 6-4 8-5 8 6 4 4 6-5 6 5 5 6z" fill="#5e7f9c" />
        <path d="M16 7l4 8-9 1zM34 1l6 13-12 1zM52 6l5 9h-9z" fill="#6fae9c" />
        <path d="M34 1l8 6 3 8h-8z" fill="#55609c" />
        <path d="M1 20l4-6 16-3 30 0 16 5 4 6-5 7-9 1-7 4-14-1-9 2-8-3-10 0-4-5-4-2z" fill="#b5602a" />
        <path d="M1 20q6-8 34-8t36 9q-6 8-34 8T1 20z" fill="#f2982e" />
        <ellipse cx="35" cy="20" rx="28" ry="7.500" fill="url(#spring)" />
      </svg>
    </div>
    <TaskButton label="Task view">
      <svg className="size-4" viewBox="0 0 16 16"><path d="M.5 0v3h10V0M.5 16v-3h10v3M.5 5.500h10v5H.5zM14.500 0v16M13 5h3v2h-3z" fill="none" stroke="#fff" strokeWidth="1.100" /></svg>
    </TaskButton>
    <div className="ml-[3px] flex gap-px">
      <TaskButton label="Microsoft Edge"><EdgeIcon className="size-6" /></TaskButton>
      <TaskButton label="File Explorer" running>
        <svg className="w-[22px] h-5" viewBox="0 0 22 20"><path d="M0 1h8l2 2h11v15H0z" fill="#e8a520" /><path d="M0 4h21v14H0z" fill="#fbd76c" /><path d="M4 18v-7h14v7h-3v-3H7v3z" fill="#3d9be0" /></svg>
      </TaskButton>
      <TaskButton label="Firefox"><FirefoxIcon className="size-6" /></TaskButton>
      <TaskButton label="Wana Decryptor" running><HandsIcon className="w-6 h-[18px]" /></TaskButton>
      <TaskButton label="Paint" running active><PaletteIcon className="size-6" /></TaskButton>
    </div>
    <div className="ml-auto flex items-center">
      <button aria-label="Show hidden icons" className="w-6 flex justify-center">
        <svg className="w-3 h-[7px]" viewBox="0 0 12 7"><path d="M.5 6.500L6 1l5.500 5.500" fill="none" stroke="#fff" strokeWidth="1.300" /></svg>
      </button>
      <button aria-label="Meet now" className="w-6 flex justify-center">
        <svg className="size-4" viewBox="0 0 16 16"><path d="M3.500 5.500h7v6h-7zM10.500 7.500l3-1.500v5l-3-1.500M4 2.500Q8 0 12 2.500M4 14Q8 16.500 12 14" fill="none" stroke="#fff" strokeWidth="1.200" /></svg>
      </button>
      <button aria-label="Network" className="w-6 flex justify-center">
        <svg className="size-4" viewBox="0 0 16 16"><path d="M5 3.500h10.500v8H3.500V8M9.500 11.500v3M6 14.500h7M.5 1.500h4v5h-4zM2.500 6v8" fill="none" stroke="#fff" strokeWidth="1.100" /></svg>
      </button>
      <button aria-label="Volume" className="w-6 flex justify-center">
        <svg className="size-4" viewBox="0 0 16 16"><path d="M.5 6h2.500l4-3.500v11L3 10H.5zM9 6q1.500 2 0 4M11 4q3 4 0 8M13 2q4.500 6 0 12" fill="none" stroke="#fff" strokeWidth="1.100" /></svg>
      </button>
      <div className="w-16 text-center leading-[18px]">
        <div>11:22 PM</div>
        <div>8/16/2024</div>
      </div>
      <button aria-label="Notifications" className="w-10 flex justify-center">
        <svg className="size-4" viewBox="0 0 16 16"><path d="M.5 1.500h15v11H10L8 14.500l-2-2H.5z" fill="none" stroke="#fff" strokeWidth="1.200" /></svg>
      </button>
      <span className="ml-2 mr-1 w-px self-stretch bg-[#555]"></span>
    </div>
  </div>
)

const App = () => (
  <main className="relative h-screen overflow-hidden bg-black font-['Open_Sans','Noto_Sans',sans-serif] text-[11px]">
    <Wallpaper />
    <Desktop />
    <WanaWindow />
    <ExplorerWindow />
    <PaintWindow />
    <Taskbar />
    <Watermark />
  </main>
)

export default App
